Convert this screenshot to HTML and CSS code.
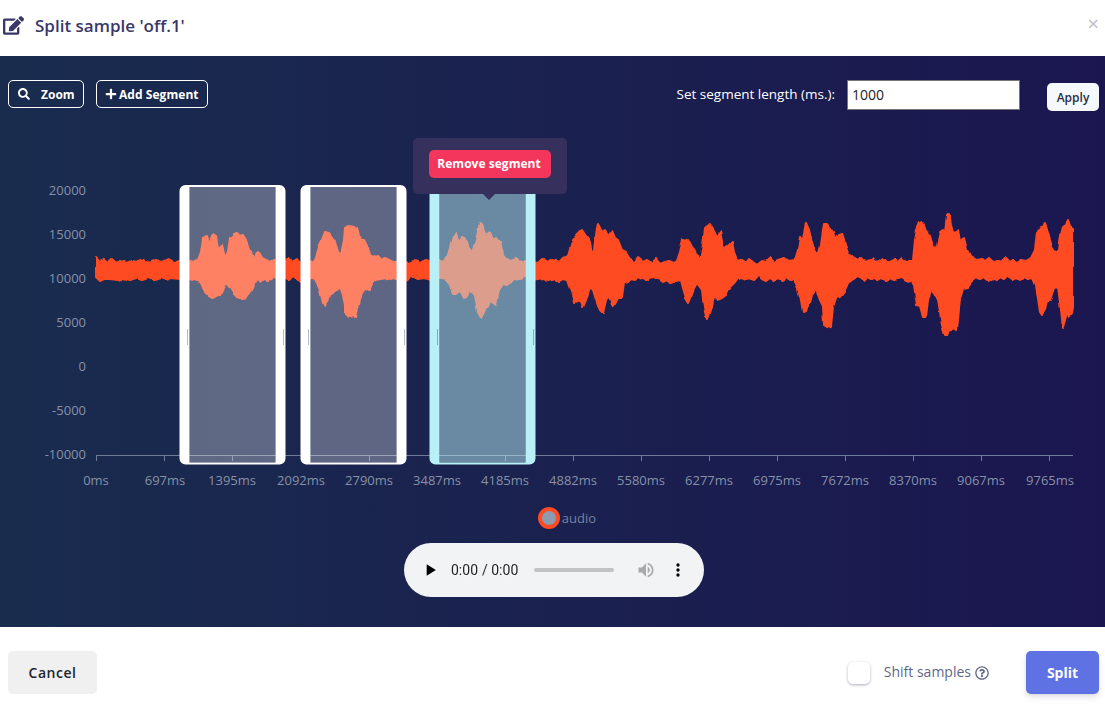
FILE: index.html
```html
<!DOCTYPE html>
<html>
<head>
<meta charset="utf-8">
<title>Split sample</title>
<link rel="stylesheet" href="styles.css">
</head>
<body>
<div class="modal">
	<div class="modal_header">
		<h5 class="modal_title">
			<svg class="title_icon" viewBox="0 0 576 512"><path d="M402.6 83.2l90.2 90.2c3.8 3.8 3.8 10 0 13.8L274.4 405.6l-92.8 10.3c-12.4 1.4-22.9-9.1-21.5-21.5l10.3-92.8L388.8 83.2c3.8-3.8 10-3.8 13.8 0zm162-22.9l-48.8-48.8c-15.2-15.2-39.9-15.2-55.2 0l-35.4 35.4c-3.8 3.8-3.8 10 0 13.8l90.2 90.2c3.8 3.8 10 3.8 13.8 0l35.4-35.4c15.2-15.3 15.2-40 0-55.2zM384 346.2V448H64V128h229.8c3.2 0 6.2-1.3 8.5-3.5l40-40c7.6-7.6 2.2-20.5-8.5-20.5H48C21.5 64 0 85.5 0 112v352c0 26.5 21.5 48 48 48h352c26.5 0 48-21.5 48-48V306.2c0-10.7-12.9-16-20.5-8.5l-40 40c-2.2 2.3-3.5 5.3-3.5 8.5z"/></svg>
			Split sample 'off.1'
		</h5>
		<span class="close">×</span>
	</div>

	<div class="panel">
		<div class="toolbar">
			<button class="btn_outline btn_zoom">
				<svg class="btn_icon" viewBox="0 0 512 512"><path d="M505 442.7L405.3 343c-4.5-4.5-10.6-7-17-7H372c27.6-35.3 44-79.7 44-128C416 93.1 322.9 0 208 0S0 93.1 0 208s93.1 208 208 208c48.3 0 92.7-16.4 128-44v16.3c0 6.4 2.5 12.5 7 17l99.7 99.7c9.4 9.4 24.6 9.4 33.9 0l28.3-28.3c9.4-9.4 9.4-24.6.1-34zM208 336c-70.7 0-128-57.2-128-128 0-70.7 57.2-128 128-128 70.7 0 128 57.2 128 128 0 70.7-57.2 128-128 128z"/></svg>
				Zoom
			</button>
			<button class="btn_outline btn_add">
				<svg class="btn_icon" viewBox="0 0 448 512"><path d="M416 208H272V64c0-17.7-14.3-32-32-32h-32c-17.700 0-32 14.300-32 32v144H32c-17.700 0-32 14.300-32 32v32c0 17.700 14.300 32 32 32h144v144c0 17.700 14.300 32 32 32h32c17.700 0 32-14.300 32-32V304h144c17.700 0 32-14.300 32-32v-32c0-17.700-14.300-32-32-32z"/></svg>
				Add Segment
			</button>
			<label class="length_label">Set segment length (ms.):</label>
			<input class="length_input" type="text" value="1000">
			<button class="btn_apply">Apply</button>
		</div>

		<div class="chart">
			<svg class="chart_svg" width="1105" height="385" viewBox="0 120 1105 385">
				<defs>
					<path id="seg_frame" fill-rule="evenodd" d="M185.500 185h94a6 6 0 0 1 6 6v267.500a6 6 0 0 1-6 6h-94a6 6 0 0 1-6-6V191a6 6 0 0 1 6-6zM189.500 187v275.500h86V187z"/>
					<filter id="rough" x="-2%" y="-10%" width="104%" height="120%">
						<feTurbulence type="fractalNoise" baseFrequency="0.14 0.08" numOctaves="1" seed="4"/>
						<feDisplacementMap in="SourceGraphic" scale="4" xChannelSelector="R" yChannelSelector="G"/>
					</filter>
				</defs>
				<g class="y_labels">
					<text x="86" y="195">20000</text>
					<text x="86" y="239">15000</text>
					<text x="86" y="283">10000</text>
					<text x="86" y="327">5000</text>
					<text x="86" y="371">0</text>
					<text x="86" y="415">-5000</text>
					<text x="86" y="459">-10000</text>
				</g>
				<path class="axis" d="M96 455.500H1073M96.500 455v6M164.500 455v6M232.500 455v6M301.500 455v6M369.500 455v6M437.500 455v6M505.500 455v6M573.500 455v6M641.500 455v6M709.500 455v6M777.500 455v6M845.500 455v6M913.500 455v6M981.500 455v6M1049.500 455v6"/>
				<g class="x_labels">
					<text x="96" y="485">0ms</text>
					<text x="165" y="485">697ms</text>
					<text x="232" y="485">1395ms</text>
					<text x="301" y="485">2092ms</text>
					<text x="369" y="485">2790ms</text>
					<text x="437" y="485">3487ms</text>
					<text x="505" y="485">4185ms</text>
					<text x="573" y="485">4882ms</text>
					<text x="641" y="485">5580ms</text>
					<text x="709" y="485">6277ms</text>
					<text x="777" y="485">6975ms</text>
					<text x="845" y="485">7672ms</text>
					<text x="913" y="485">8370ms</text>
					<text x="981" y="485">9067ms</text>
					<text x="1050" y="485">9765ms</text>
				</g>
				<path class="wave" d="M96 258L100 262 104 260 108 263 112 259 116 263 120 261 126 263 132 261 138 262 144 260 150 263 156 260 162 262 168 259 174 262 180 261 186 262 190 261 194 262 198 260 201 252 203 238 207 236 209 243 213 234 216 236 218 248 222 245 225 258 228 252 230 238 234 234 237 233 240 236 243 235 246 240 249 250 252 252 255 260 258 252 260 254 262 258 266 260 270 262 273 260 278 262 283 259 286 262 288 258 292 262 297 259 300 263 305 262 309 260 313 263 316 258 319 246 322 240 325 232 329 233 331 238 335 241 338 252 341 255 344 240 345 228 349 226 353 227 357 229 360 240 364 240 368 248 370 256 373 258 377 256 381 260 385 258 389 260 393 262 398 262 403 260 408 263 414 261 420 263 426 260 432 262 438 260 443 262 447 258 450 248 453 236 456 233 459 245 462 237 466 239 468 247 472 252 475 245 478 232 480 223 483 228 486 235 490 232 493 240 496 238 500 243 503 253 507 258 511 261 516 259 520 262 526 260 532 262 538 263 543 258 547 262 552 259 556 260 560 262 564 258 568 256 571 246 573 240 577 235 582 230 586 236 590 243 592 255 594 250 597 228 598 224 602 232 605 230 608 236 612 231 615 238 618 240 622 250 626 252 630 258 634 264 638 258 643 262 647 260 652 263 656 259 660 264 665 262 669 261 674 263 677 261 680 252 683 240 685 241 688 239 691 245 696 254 700 260 703 245 705 228 710 224 714 230 717 237 720 232 723 246 727 247 732 242 734 252 737 260 741 259 746 263 749 259 753 262 757 265 762 261 766 262 770 258 774 262 778 260 784 258 788 261 795 260 798 250 800 237 803 238 806 223 809 230 812 243 815 250 818 255 821 245 824 224 827 224 830 228 833 232 835 240 838 234 842 233 845 245 848 253 852 255 857 260 861 258 865 262 868 261 872 258 875 262 879 261 883 258 887 262 890 262 894 260 898 262 902 258 906 262 910 262 913 260 915 240 917 230 920 223 922 222 925 228 928 232 931 240 935 250 937 245 940 232 943 230 945 232 947 216 949 214 951 225 953 233 956 232 958 230 960 243 964 238 967 250 970 256 977 260 981 259 985 261 989 258 993 262 997 260 1001 262 1005 258 1009 262 1013 260 1017 262 1021 260 1026 261 1031 258 1035 250 1037 232 1041 230 1044 225 1045 222 1048 232 1050 240 1052 247 1056 253 1059 250 1061 235 1063 227 1066 225 1068 220 1070 226 1073 228 1073 307 1072 313 1069 317 1067 312 1065 320 1063 327 1061 310 1058 287 1054 288 1050 300 1047 300 1045 308 1042 315 1040 312 1038 298 1036 285 1033 278 1028 279 1024 277 1020 280 1016 277 1012 279 1008 276 1004 280 1000 278 996 280 992 278 988 280 984 277 980 279 977 278 972 282 968 287 963 288 960 298 958 320 957 330 954 328 952 330 949 331 947 335 945 335 942 325 938 300 935 293 931 290 928 300 926 317 923 317 920 306 917 305 914 285 910 280 906 281 902 278 898 279 894 280 890 278 886 280 880 278 876 280 872 279 868 277 864 281 860 278 857 277 852 280 848 283 844 292 840 297 836 298 833 307 831 326 827 327 824 325 823 306 820 300 816 290 812 295 810 303 806 311 803 312 801 300 798 288 794 279 790 280 786 277 782 280 778 278 774 280 770 278 766 281 762 279 758 276 754 280 750 278 746 279 742 277 738 278 735 282 730 287 726 295 722 298 717 300 714 295 712 306 708 318 706 316 704 307 702 290 697 283 693 290 690 298 688 303 685 298 682 288 680 280 676 281 672 283 668 279 664 281 660 278 656 279 650 277 646 280 642 279 638 277 634 280 630 279 627 282 624 283 622 298 618 298 615 304 612 305 609 296 606 300 603 313 600 310 597 303 593 290 590 287 586 300 583 307 580 300 578 301 575 302 572 292 568 280 563 279 559 281 555 279 551 280 547 281 542 278 538 279 531 280 526 277 520 279 514 278 510 282 507 285 503 284 499 290 496 305 490 300 487 305 484 312 481 318 478 312 475 295 470 290 467 296 464 298 460 290 456 295 453 295 450 285 446 280 442 279 436 277 430 280 424 278 418 279 412 276 406 280 402 278 398 280 393 277 388 279 380 280 373 282 369 290 365 289 362 293 359 300 355 317 350 316 346 312 343 295 340 287 336 291 333 293 329 295 326 305 323 303 320 290 317 283 313 278 309 280 305 278 302 281 297 279 293 276 289 280 285 278 282 279 273 278 269 280 265 279 261 283 258 280 254 283 251 290 247 293 243 299 240 299 236 296 233 293 230 288 226 283 222 293 219 295 215 297 212 298 208 296 205 293 202 285 199 280 194 279 190 278 185 279 180 279 172 278 166 280 160 278 154 280 148 278 142 280 136 278 130 280 124 278 118 280 110 279 104 279 100 281 96 277Z"/>
				<!-- segments -->
				<g class="segment">
					<rect class="seg_fill" x="189.500" y="187" width="86" height="275.500"/>
					<use href="#seg_frame"/>
					<path class="seg_handle" d="M187.500 329v16M283.500 329v16"/>
				</g>
				<g class="segment" transform="translate(121 0)">
					<rect class="seg_fill" x="189.500" y="187" width="86" height="275.500"/>
					<use href="#seg_frame"/>
					<path class="seg_handle" d="M187.500 329v16M283.500 329v16"/>
				</g>
				<g class="segment segment_active" transform="translate(250 0)">
					<rect class="seg_fill" x="189.500" y="187" width="86" height="275.500"/>
					<use href="#seg_frame"/>
					<path class="seg_handle" d="M187.500 329v16M283.500 329v16"/>
				</g>
			</svg>
			<div class="seg_tooltip">
				<button class="btn_remove">Remove segment</button>
			</div>
		</div>

		<div class="legend">
			<span class="legend_dot"></span>
			<span class="legend_text">audio</span>
		</div>

		<div class="player">
			<audio controls preload="none" src="off.1.wav" class="player_audio"></audio>
		</div>
	</div>

	<div class="modal_footer">
		<button class="btn_cancel">Cancel</button>
		<span class="checkbox"></span>
		<span class="shift_label">Shift samples</span>
		<svg class="help_icon" viewBox="0 0 512 512"><path d="M256 8C119 8 8 119.100 8 256c0 137 111 248 248 248s248-111 248-248C504 119.100 393 8 256 8zm0 448c-110.500 0-200-89.500-200-200 0-110.400 89.500-200 200-200 110.500 0 200 89.500 200 200 0 110.500-89.500 200-200 200zm107.200-255.200c0 67-72.400 68.100-72.400 92.900V300c0 6.600-5.400 12-12 12h-45.600c-6.600 0-12-5.400-12-12v-8.700c0-35.700 27.100-50 47.600-61.500 17.600-9.900 28.300-16.600 28.300-29.600 0-17.200-21.900-28.600-39.700-28.600-23.100 0-33.800 10.900-48.800 29.900-4 5.100-11.400 6.100-16.600 2.100l-27.800-21.100c-5.100-3.900-6.300-11.100-2.600-16.400C184.800 131.500 214.900 112 261.800 112c49.100 0 101.500 38.300 101.500 88.800zM298 368c0 23.200-18.800 42-42 42s-42-18.800-42-42 18.800-42 42-42 42 18.800 42 42z"/></svg>
		<button class="btn_split">Split</button>
	</div>
</div>
</body>
</html>
```

FILE: styles.css
```css
html,body{margin:0;padding:0;background:#fff;}
body{font-family:"Open Sans","Noto Sans",Arial,sans-serif;}
button{font-family:inherit;cursor:pointer;}

.modal{display:flex;flex-direction:column;width:1105px;height:705px;overflow:hidden;}

.modal_header{display:flex;align-items:center;justify-content:space-between;height:56px;padding:0 6px 6px 3px;flex:none;box-sizing:border-box;}
.modal_title{display:flex;align-items:center;margin:0;font-size:17px;font-weight:600;color:#3a3768;}
.title_icon{width:21px;height:19px;margin-right:11px;fill:#3a3768;}
.close{font-size:20px;line-height:1;color:#bdbdc4;padding-bottom:2px;}

.panel{flex:1;box-sizing:border-box;padding-top:24px;background:linear-gradient(90deg,#192c4e 0%,#1b1650 100%);}

.toolbar{display:flex;align-items:flex-start;height:31px;padding-left:8px;margin-bottom:9px;}
.btn_outline{display:flex;align-items:center;height:28px;box-sizing:border-box;padding:0;background:transparent;border:1px solid #fff;border-radius:5px;color:#fff;font-size:12px;font-weight:700;}
.btn_zoom{width:76px;padding-left:9px;margin-right:12px;}
.btn_zoom .btn_icon{margin-right:11px;}
.btn_add{width:112px;padding-left:8px;letter-spacing:.05px;}
.btn_add .btn_icon{margin-right:2px;}
.btn_icon{width:12px;height:12px;fill:#fff;}
.length_label{margin:5px 12px 0 auto;font-size:13.5px;color:#fff;}
.length_input{width:173px;height:30px;box-sizing:border-box;padding:0 2px 2px 4px;border:1px solid #767676;background:#fff;font-family:inherit;font-size:14px;color:#222;margin:0 27px 0 0;outline:none;}
.btn_apply{width:52px;height:28px;margin:3px 6px 0 0;padding:0;border:0;border-radius:5px;background:#f6f9fc;color:#2a2f45;font-size:12px;font-weight:600;}

.chart{position:relative;height:385px;}
.chart_svg{display:block;}
.y_labels text{font-size:13px;fill:#8791a8;text-anchor:end;}
.x_labels text{font-size:13px;fill:#8791a8;text-anchor:middle;}
.axis{fill:none;stroke:#6f7b99;stroke-width:1;}
.wave{fill:#ff4b23;stroke:#ff4b23;stroke-width:2;stroke-linejoin:round;filter:url(#rough);}
.segment{fill:#fff;}
.seg_fill{fill:#fff;fill-opacity:.3;}
.seg_handle{fill:none;stroke:#b9bccb;stroke-width:1;}
.segment_active{fill:#b9f0f8;}
.segment_active .seg_fill{fill:#b9f0f8;fill-opacity:.5;}
.segment_active .seg_handle{stroke:#8ba9bd;}

.seg_tooltip{position:absolute;left:412.500px;top:18px;box-sizing:border-box;width:154px;height:56px;padding:12px 16px;background:#36315c;border-radius:5px;}
.seg_tooltip:after{content:"";position:absolute;left:70px;bottom:-6px;border-left:6px solid transparent;border-right:6px solid transparent;border-top:6px solid #36315c;}
.btn_remove{display:block;width:122px;height:28px;padding:0 1px 2px 0;border:0;border-radius:5px;background:#f5365c;color:#fff;font-size:12px;font-weight:700;letter-spacing:.03px;}

.legend{display:flex;align-items:center;justify-content:center;height:26px;margin-left:29px;}
.legend_dot{width:14px;height:14px;margin-right:2px;background:#8d9ab0;border:4px solid #ff4b23;border-radius:50%;}
.legend_text{font-size:13px;color:#7682a2;margin-bottom:1px;}

.player{display:flex;justify-content:center;margin:12px 0 0 3px;}
.player_audio{display:block;width:300px;height:54px;}

.modal_footer{display:flex;align-items:center;height:78px;flex:none;box-sizing:border-box;padding:13px 6px 0 8px;}
.btn_cancel{width:89px;height:43px;padding:0;border:0;border-radius:5px;background:#f0f0f0;color:#212529;font-size:14px;font-weight:600;letter-spacing:.5px;margin-right:auto;}
.checkbox{width:22px;height:22px;box-sizing:border-box;background:#fff;border-radius:5px;box-shadow:0 1px 3px rgba(50,50,93,.4);margin-right:15px;}
.shift_label{font-size:14px;color:#5f6788;margin:0 4px 2px -1px;}
.help_icon{width:14px;height:14px;fill:#5f6788;margin:0 37px 0 0;}
.btn_split{width:73px;height:43px;padding:0;border:0;border-radius:5px;background:#5e72e4;color:#fff;font-size:14px;font-weight:700;box-shadow:0 4px 6px rgba(50,50,93,.11),0 1px 3px rgba(0,0,0,.08);}
```
